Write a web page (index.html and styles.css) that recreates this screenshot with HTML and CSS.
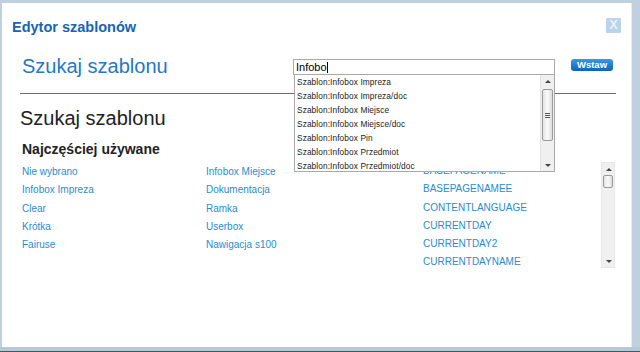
FILE: index.html
```html
<!DOCTYPE html>
<html lang="pl">
<head>
    <meta charset="UTF-8">
    <title>Edytor szablonów</title>
    <link rel="stylesheet" href="styles.css">
</head>
<body>
    <div class="modal">
        <div class="titlebar">
            <h1>Edytor szablonów</h1>
            <span class="close">X</span>
        </div>

        <div class="search-row">
            <div class="search-title">Szukaj szablonu</div>
            <div class="search-box">
                <div class="search-input">Infobo<span class="caret"></span></div>
                <div class="suggest">
                    <ul class="suggest-list">
                        <li>Szablon:Infobox Impreza</li>
                        <li>Szablon:Infobox Impreza/doc</li>
                        <li>Szablon:Infobox Miejsce</li>
                        <li>Szablon:Infobox Miejsce/doc</li>
                        <li>Szablon:Infobox Pin</li>
                        <li>Szablon:Infobox Przedmiot</li>
                        <li>Szablon:Infobox Przedmiot/doc</li>
                    </ul>
                    <div class="scrollbar small">
                        <span class="arrow up"></span>
                        <span class="thumb grip"><i></i><i></i><i></i></span>
                        <span class="fill"></span>
                        <span class="arrow down"></span>
                    </div>
                </div>
            </div>
            <button class="insert">Wstaw</button>
        </div>

        <div class="rule"></div>

        <h2>Szukaj szablonu</h2>
        <h3>Najczęściej używane</h3>

        <div class="columns">
            <ul class="links col-a">
                <li>Nie wybrano</li>
                <li>Infobox Impreza</li>
                <li>Clear</li>
                <li>Krótka</li>
                <li>Fairuse</li>
            </ul>
            <ul class="links col-b">
                <li>Infobox Miejsce</li>
                <li>Dokumentacja</li>
                <li>Ramka</li>
                <li>Userbox</li>
                <li>Nawigacja s100</li>
            </ul>
            <div class="all-box">
                <ul class="links col-c">
                    <li>BASEPAGENAME</li>
                    <li>BASEPAGENAMEE</li>
                    <li>CONTENTLANGUAGE</li>
                    <li>CURRENTDAY</li>
                    <li>CURRENTDAY2</li>
                    <li>CURRENTDAYNAME</li>
                </ul>
                <div class="scrollbar">
                    <span class="arrow up"></span>
                    <span class="thumb"></span>
                    <span class="fill"></span>
                    <span class="arrow down"></span>
                </div>
            </div>
        </div>
    </div>
    <div class="taskbar"></div>
</body>
</html>
```

FILE: styles.css
```css
* {
    margin: 0;
    padding: 0;
    box-sizing: border-box;
}

body {
    font-family: 'Liberation Sans', Arial, sans-serif;
    background: #bfd1de;
    width: 640px;
    height: 352px;
    overflow: hidden;
}

.modal {
    position: relative;
    background: #fff;
    margin: 3px 8px 0 2px;
    height: 344px;
    border-right: 1px solid #e4ecf2;
}

.titlebar {
    display: flex;
    justify-content: space-between;
    align-items: flex-start;
    padding: 15px 10px 0 10px;
    height: 36px;
}

h1 {
    color: #1565b2;
    font-size: 14.5px;
    font-weight: 700;
    line-height: 18px;
}

.close {
    width: 15px;
    height: 15px;
    background: #bad5ea;
    color: #fff;
    font-size: 12px;
    line-height: 15px;
    text-align: center;
    border-radius: 1px;
}

.search-row {
    display: flex;
    align-items: flex-start;
    padding-left: 20px;
    height: 50px;
}

.search-title {
    color: #1f78c8;
    font-size: 20px;
    line-height: 24px;
    width: 271px;
    margin-top: 15px;
}

.search-box {
    position: relative;
    width: 262px;
    margin-top: 20px;
}

.search-input {
    height: 16px;
    border: 1px solid #a9a9a9;
    font-size: 11px;
    line-height: 14px;
    padding-left: 2px;
    color: #000;
}

.caret {
    display: inline-block;
    width: 1px;
    height: 11px;
    background: #000;
    vertical-align: -2px;
}

.suggest {
    position: absolute;
    top: 15px;
    left: 1px;
    width: 261px;
    height: 98px;
    background: #fff;
    border: 1px solid #a9a9a9;
    display: flex;
    z-index: 2;
}

.suggest-list {
    list-style: none;
    flex: 1;
}

.suggest-list li {
    font-size: 8.3px;
    line-height: 14px;
    color: #222;
    padding-left: 2px;
    letter-spacing: 0.1px;
}

.insert {
    margin: 20px 0 0 16px;
    width: 42px;
    height: 12px;
    border: none;
    border-radius: 3px;
    background: linear-gradient(#3c98e0, #0b66b8);
    color: #fff;
    font-family: 'Liberation Sans', Arial, sans-serif;
    font-size: 9.5px;
    font-weight: 700;
    line-height: 12px;
}

.rule {
    height: 1px;
    background: #6e6e6e;
    margin: 4px 15px 0 18px;
}

h2 {
    color: #222;
    font-size: 20px;
    font-weight: 400;
    line-height: 24px;
    margin: 12px 0 0 18px;
}

h3 {
    color: #222;
    font-size: 14px;
    font-weight: 700;
    line-height: 18px;
    margin: 10px 0 0 20px;
}

.columns {
    display: grid;
    grid-template-columns: 184px 217px 192px;
    padding-left: 20px;
    margin-top: 4px;
}

.links {
    list-style: none;
}

.links li {
    color: #2a8bd0;
    font-size: 10px;
    line-height: 18.3px;
    white-space: nowrap;
}

.col-a, .col-b {
    margin-top: 1px;
}

.all-box {
    display: flex;
    justify-content: space-between;
    height: 106px;
}

.scrollbar {
    width: 14px;
    display: flex;
    flex-direction: column;
    background: #f0f0f0;
    border: 1px solid #e8e8e8;
}

.scrollbar .fill {
    flex: 1;
}

.arrow {
    height: 12px;
    position: relative;
}

.arrow::after {
    content: '';
    position: absolute;
    left: 4px;
    top: 5px;
    border-left: 3px solid transparent;
    border-right: 3px solid transparent;
}

.arrow.up::after {
    border-bottom: 3px solid #444;
}

.arrow.down::after {
    border-top: 3px solid #444;
}

.thumb {
    height: 13px;
    margin: 0 1px;
    background: linear-gradient(90deg, #e4e4e4, #fafafa 50%, #dcdcdc);
    border: 1px solid #9a9a9a;
    border-radius: 2px;
}

.scrollbar.small {
    border: none;
    border-left: 1px solid #e4e4e4;
}

.thumb.grip {
    height: 52px;
    display: flex;
    flex-direction: column;
    justify-content: center;
    align-items: center;
    gap: 1px;
    margin-top: 2px;
}

.thumb.grip i {
    display: block;
    width: 5px;
    height: 1px;
    background: #555;
}

.taskbar {
    height: 5px;
    background: #b6c9d6;
    border-bottom: 1px solid #4a5560;
}
```
